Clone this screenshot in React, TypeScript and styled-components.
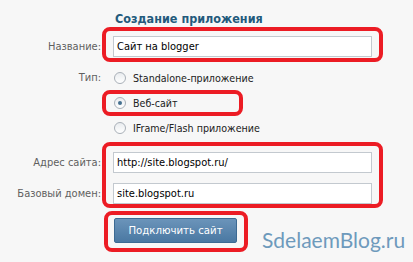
import React from "react";
import styled, { createGlobalStyle } from "styled-components";

const Global = createGlobalStyle`
  html, body { margin: 0; padding: 0; background: #f7f7f7; }
  body {
    font-family: "DejaVu Sans Condensed", "DejaVu Sans", "Liberation Sans", sans-serif;
    font-stretch: condensed;
    font-size: 11px;
  }
`;

const Page = styled.div`
  position: relative;
  width: 413px;
  height: 262px;
  overflow: hidden;
  background: #f7f7f7;
`;

const Form = styled.div`
  display: flex;
  flex-direction: column;
  padding-top: 11px;
`;

const Row = styled.div<{ $mt?: number }>`
  display: grid;
  grid-template-columns: 101px auto;
  column-gap: 1px;
  align-items: start;
  margin-top: ${(p) => p.$mt ?? 0}px;
`;

const Title = styled.h2`
  grid-column: 2;
  margin: 0 0 0 13px;
  font-size: 12.5px;
  line-height: 16px;
  font-weight: bold;
  color: #235a7c;
`;

const Labels = styled.div<{ $pt?: number; $gap?: number }>`
  display: flex;
  flex-direction: column;
  align-items: flex-end;
  gap: ${(p) => p.$gap ?? 0}px;
  padding-top: ${(p) => p.$pt ?? 0}px;
`;

const Label = styled.div<{ $h?: number }>`
  height: ${(p) => p.$h ?? 21}px;
  line-height: ${(p) => p.$h ?? 21}px;
  color: #5f5f5f;
  white-space: nowrap;
`;

const Highlight = styled.div<{ $w: number; $pad: string; $ml?: number; $gap?: number }>`
  justify-self: start;
  display: flex;
  flex-direction: column;
  gap: ${(p) => p.$gap ?? 0}px;
  width: ${(p) => p.$w}px;
  box-sizing: border-box;
  margin-left: ${(p) => p.$ml ?? 0}px;
  padding: ${(p) => p.$pad};
  border: 4px solid #ec1c24;
  border-radius: 8px;
`;

const Input = styled.div`
  box-sizing: border-box;
  height: 21px;
  padding: 0 3px;
  background: #fff;
  border: 1px solid #c3c9cf;
  font-size: 11px;
  line-height: 19px;
  color: #000;
  white-space: nowrap;
`;

const RadioRow = styled.div<{ $indent?: number; $h?: number }>`
  display: flex;
  align-items: center;
  gap: 7px;
  height: ${(p) => p.$h ?? 20}px;
  padding-left: ${(p) => p.$indent ?? 0}px;
  font-size: 10.6px;
  color: #222;
  white-space: nowrap;
`;

const Radio = styled.span<{ $checked?: boolean }>`
  position: relative;
  flex: none;
  width: 12px;
  height: 12px;
  box-sizing: border-box;
  border-radius: 50%;
  border: 1px solid #a9b0b8;
  background: linear-gradient(#e9ecef, #ffffff);
  &::after {
    content: "";
    display: ${(p) => (p.$checked ? "block" : "none")};
    position: absolute;
    left: 3px;
    top: 3px;
    width: 4px;
    height: 4px;
    border-radius: 50%;
    background: #45708f;
  }
`;

const Button = styled.div`
  box-sizing: border-box;
  width: 123px;
  height: 25px;
  border: 1px solid #3c6a93;
  border-radius: 2px;
  background: linear-gradient(#6b94ba, #4a78a2);
  color: #fff;
  font-size: 11.3px;
  line-height: 23px;
  text-align: center;
  white-space: nowrap;
`;

const Watermark = styled.div`
  position: absolute;
  left: 262px;
  top: 227px;
  font-family: "Lato", "Open Sans", sans-serif;
  font-stretch: normal;
  font-size: 21px;
  line-height: 26px;
  color: #6e9abc;
  white-space: nowrap;
`;

export default function App() {
  return (
    <Page>
      <Global />
      <Form>
        <Row>
          <Title>Создание приложения</Title>
        </Row>
        <Row>
          <Labels $pt={9}>
            <Label>Название:</Label>
          </Labels>
          <Highlight $w={281} $pad="5px 7px 1px 7px">
            <Input>Сайт на blogger</Input>
          </Highlight>
        </Row>
        <Row $mt={6}>
          <Labels>
            <Label $h={20}>Тип:</Label>
          </Labels>
          <RadioRow $indent={12}>
            <Radio />
            Standalone-приложение
          </RadioRow>
        </Row>
        <Row $mt={2}>
          <Labels />
          <Highlight $w={141} $pad="0 0 0 8px">
            <RadioRow $h={18}>
              <Radio $checked />
              Веб-сайт
            </RadioRow>
          </Highlight>
        </Row>
        <Row $mt={2}>
          <Labels />
          <RadioRow $indent={12}>
            <Radio />
            IFrame/Flash приложение
          </RadioRow>
        </Row>
        <Row $mt={4}>
          <Labels $pt={10} $gap={10}>
            <Label>Адрес сайта:</Label>
            <Label>Базовый домен:</Label>
          </Labels>
          <Highlight $w={281} $pad="6px 7px 0 7px" $gap={10}>
            <Input>http://site.blogspot.ru/</Input>
            <Input>site.blogspot.ru</Input>
          </Highlight>
        </Row>
        <Row $mt={3}>
          <Labels />
          <Highlight $w={144} $ml={2} $pad="3px 7px 5px 6px">
            <Button>Подключить сайт</Button>
          </Highlight>
        </Row>
      </Form>
      <Watermark>SdelaemBlog.ru</Watermark>
    </Page>
  );
}
